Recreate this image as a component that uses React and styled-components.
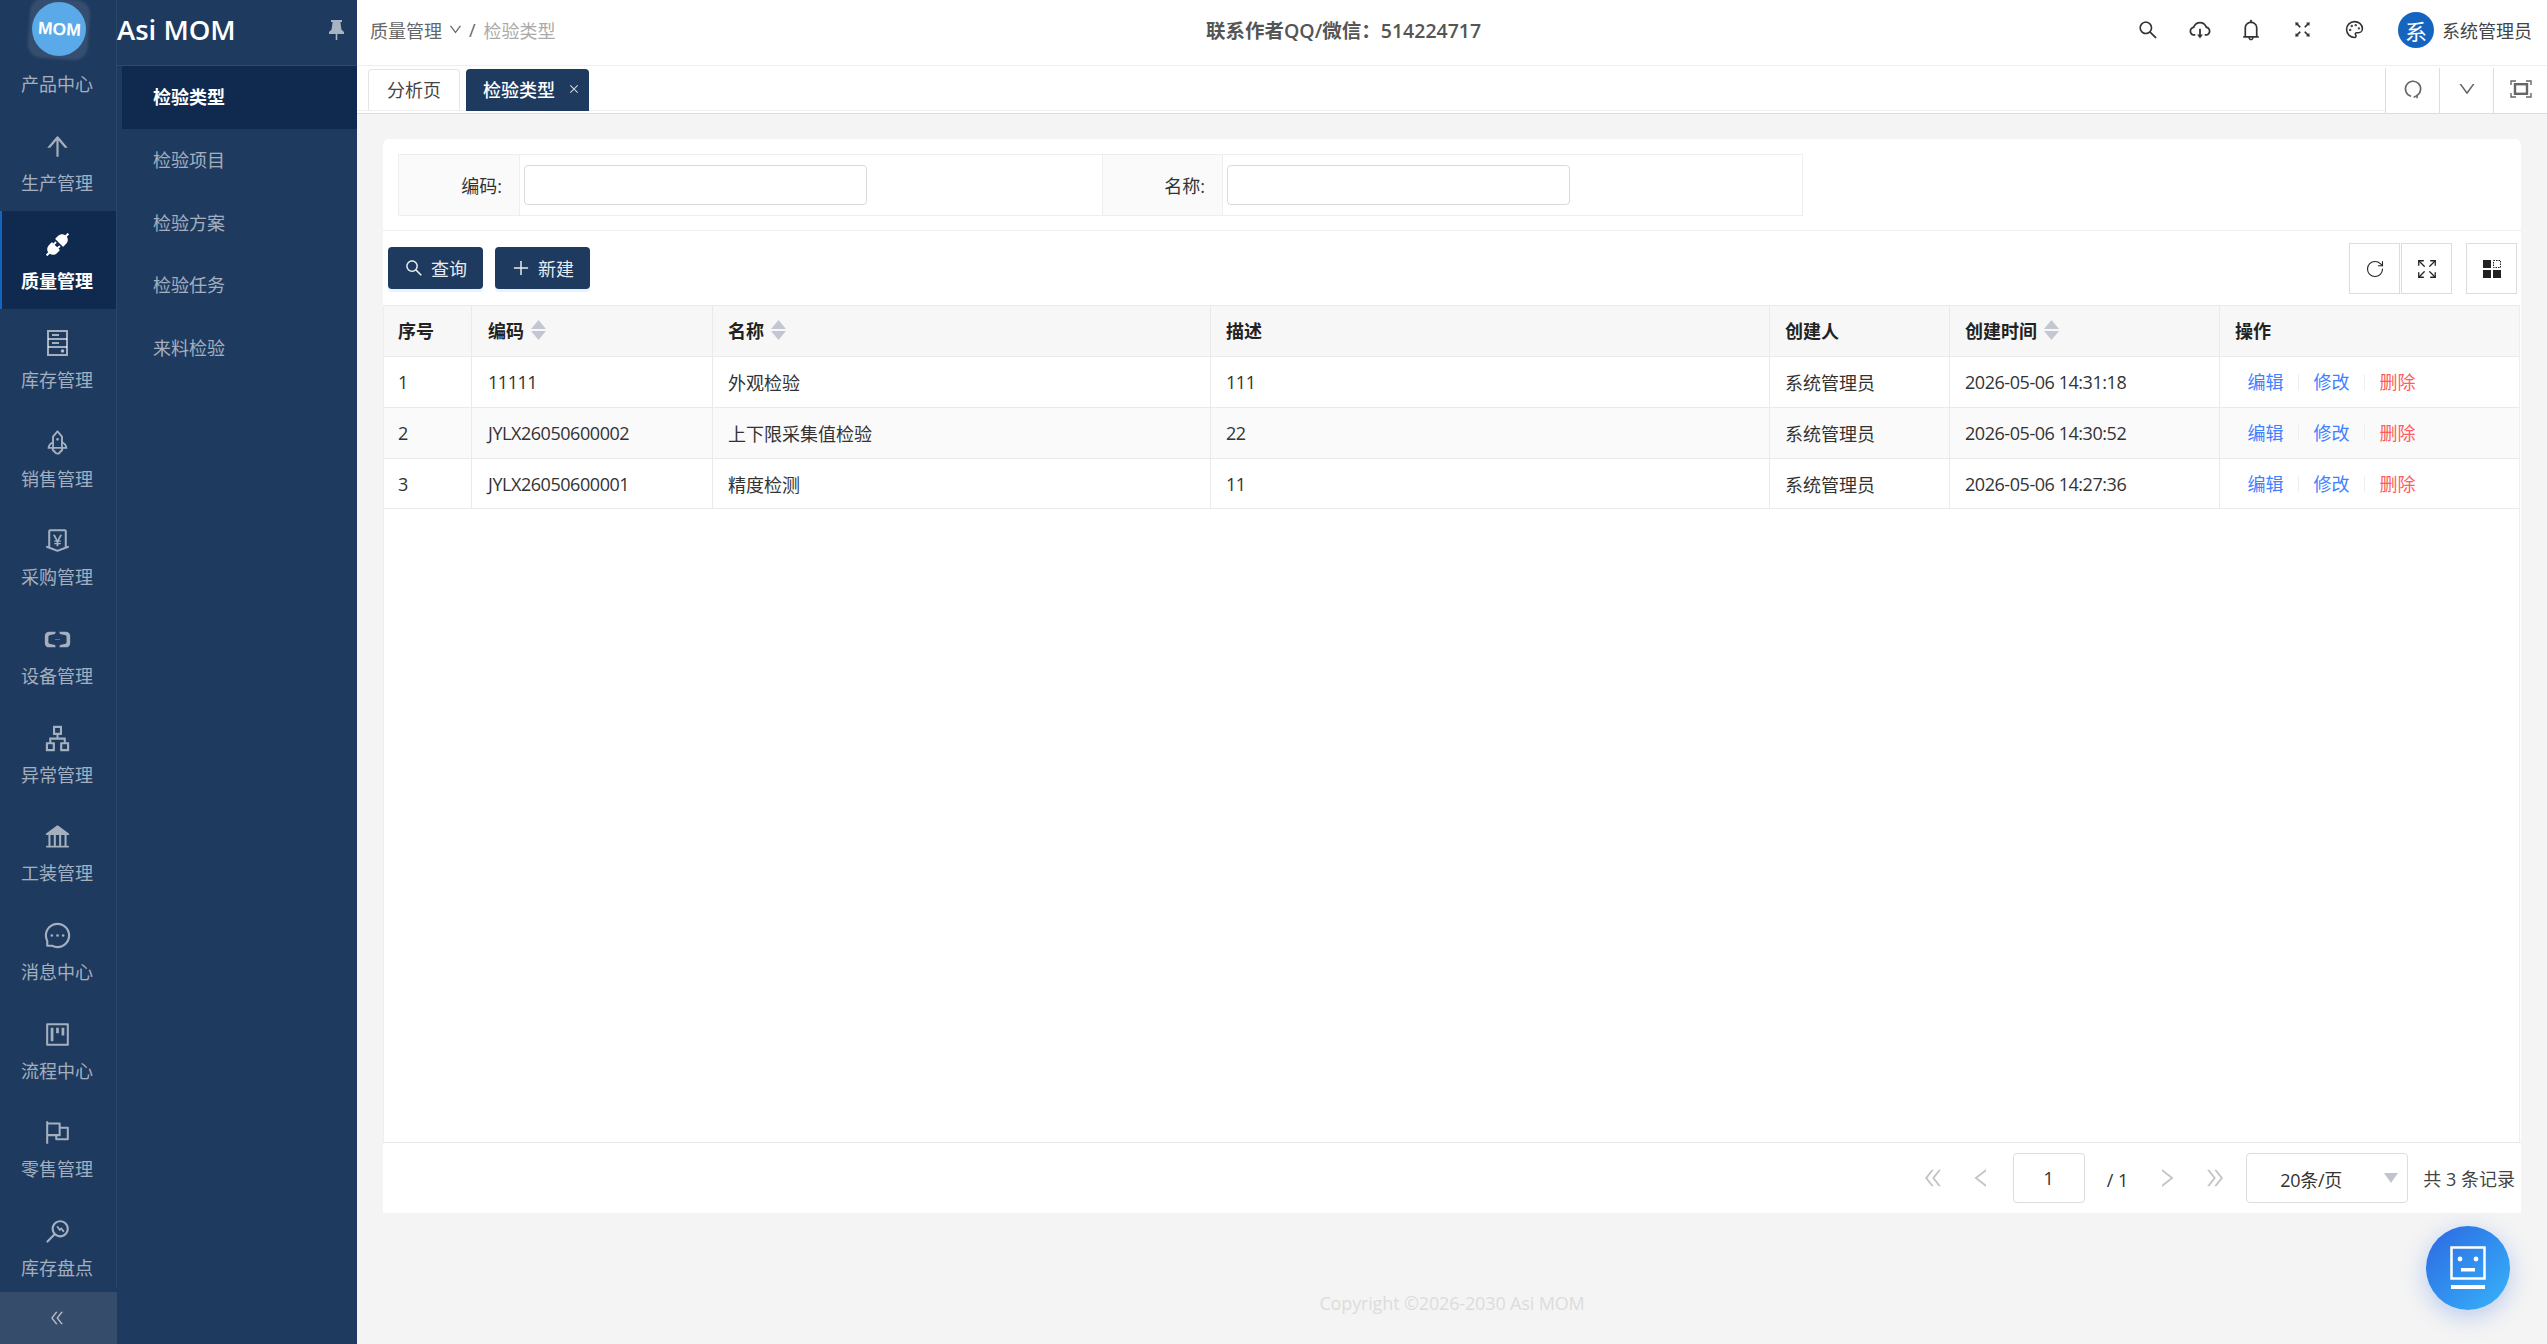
import React from 'react';
import styled, { createGlobalStyle } from 'styled-components';
import {
  AiOutlineArrowUp, AiFillApi, AiOutlineRocket, AiOutlineMoneyCollect, AiOutlineAliyun,
  AiOutlineApartment, AiFillBank, AiOutlineMessage, AiOutlineProject, AiOutlineFlag,
  AiOutlineMonitor, AiOutlineDoubleLeft, AiOutlineDoubleRight, AiOutlineLeft, AiOutlineRight,
  AiOutlineSearch, AiOutlineCloudDownload, AiOutlineBell, AiOutlineFullscreen, AiOutlineDown,
  AiOutlineClose, AiOutlinePlus,
} from 'react-icons/ai';
import { Palette, Expand, RotateCw } from 'lucide-react';

const GlobalStyle = createGlobalStyle`
  html, body { margin: 0; padding: 0; height: 100%; }
  body {
    font-family: "Open Sans", "Noto Sans CJK SC", sans-serif;
    font-size: 18px;
    color: #333;
    background: #f4f4f4;
    overflow: hidden;
  }
  * { box-sizing: border-box; }
`;

const Page = styled.div`
  display: flex;
  width: 2547px;
  height: 1344px;
  position: relative;
  overflow: hidden;
`;

const Sidebar = styled.aside`
  display: flex;
  flex: 0 0 357px;
  background: #1e3a5f;
`;

const Rail = styled.div`
  display: flex;
  flex-direction: column;
  flex: 0 0 117px;
`;

const RailList = styled.div`
  flex: 1;
  min-height: 0;
  overflow: hidden;
  border-right: 1px solid rgba(255, 255, 255, 0.07);
`;

const LogoSlot = styled.div`
  height: 66px;
  padding: 2px 0 0 32px;
`;

const Logo = styled.div`
  position: relative;
  width: 54px;
  height: 54px;
  border-radius: 50%;
  display: flex;
  align-items: center;
  justify-content: center;

  &::before {
    content: '';
    position: absolute;
    inset: -3px;
    border-radius: 14px;
    background: rgba(255, 255, 255, 0.1);
    transform: rotate(4deg);
    filter: blur(1px);
  }

  &::after {
    content: '';
    position: absolute;
    inset: 0;
    border-radius: 50%;
    background: #5aa9e8;
  }
`;

const LogoText = styled.span`
  position: relative;
  z-index: 1;
  font-family: "Liberation Sans", sans-serif;
  font-weight: 700;
  font-size: 17.5px;
  color: #fff;
  transform: rotate(3deg);
`;

const FirstLabel = styled.div`
  height: 46px;
  padding: 6px 2px 0 0;
  text-align: center;
  line-height: 24px;
  color: rgba(255, 255, 255, 0.6);
`;

const RailItem = styled.div`
  height: 98.7px;
  display: flex;
  flex-direction: column;
  align-items: center;
  padding: 20px 4px 0 0;
  border-left: 2px solid ${props => (props.$active ? '#1565c0' : 'transparent')};
  background: ${props => (props.$active ? '#102a4f' : 'transparent')};
  color: ${props => (props.$active ? '#fff' : 'rgba(255, 255, 255, 0.6)')};
  font-weight: ${props => (props.$active ? 700 : 400)};
`;

const RailIcon = styled.div`
  height: 28px;
  display: flex;
  align-items: center;
  justify-content: center;
  font-size: 29px;
  margin-bottom: 10.5px;
`;

const RailLabel = styled.div`
  line-height: 24px;
`;

const Collapse = styled.div`
  flex: 0 0 52px;
  margin-top: 4px;
  padding-right: 3px;
  background: #364c6b;
  color: rgba(255, 255, 255, 0.65);
  display: flex;
  align-items: center;
  justify-content: center;
  font-size: 18px;
`;

const SubPanel = styled.div`
  flex: 1;
  display: flex;
  flex-direction: column;
`;

const SubHead = styled.div`
  height: 66px;
  flex: none;
  display: flex;
  align-items: center;
  justify-content: space-between;
  padding: 0 13px 6px 0;
  border-bottom: 1px solid rgba(255, 255, 255, 0.08);
`;

const Brand = styled.div`
  font-size: 27.5px;
  font-weight: 600;
  color: #fff;
`;

const SubItem = styled.div`
  height: 62.7px;
  margin-left: 5px;
  padding: 0 0 2px 31px;
  display: flex;
  align-items: center;
  background: ${props => (props.$active ? '#102a4f' : 'transparent')};
  color: ${props => (props.$active ? '#fff' : 'rgba(255, 255, 255, 0.6)')};
  font-weight: ${props => (props.$active ? 700 : 400)};
`;

const Main = styled.main`
  flex: 1;
  display: flex;
  flex-direction: column;
  min-width: 0;
`;

const Header = styled.header`
  flex: 0 0 66px;
  display: flex;
  align-items: center;
  padding: 0 15px 6px 13px;
  background: #fff;
  border-bottom: 1px solid #eee;
`;

const Crumbs = styled.div`
  flex: 0 0 836px;
  display: flex;
  align-items: center;
  color: #666;
`;

const CrumbArrow = styled.span`
  display: flex;
  font-size: 15px;
  margin: 0 6px;
`;

const CrumbCurrent = styled.span`
  color: #aaa;
  margin-left: 8px;
`;

const Notice = styled.div`
  font-size: 19.5px;
  font-weight: 600;
  color: #555;
`;

const HeadTools = styled.div`
  margin-left: auto;
  display: flex;
  align-items: center;
`;

const HeadIcon = styled.div`
  width: 51.5px;
  display: flex;
  justify-content: center;
  color: #333;
  font-size: ${props => props.$size || 22}px;
`;

const Avatar = styled.div`
  width: 36px;
  height: 36px;
  margin-left: 18px;
  border-radius: 50%;
  background: #1565c0;
  color: #fff;
  font-size: 22px;
  display: flex;
  align-items: center;
  justify-content: center;
`;

const UserName = styled.div`
  margin-left: 8px;
  color: #444;
`;

const TabBar = styled.div`
  flex: 0 0 48px;
  display: flex;
  background: #fff;
  border-bottom: 1px solid #ddd;
`;

const TabStrip = styled.div`
  flex: 1;
  height: 45px;
  display: flex;
  align-items: flex-end;
  gap: 6px;
  padding-left: 11px;
  border-bottom: 1px solid #eee;
`;

const Tab = styled.div`
  height: ${props => (props.$active ? 42 : 41)}px;
  margin-bottom: ${props => (props.$active ? -1 : 0)}px;
  padding: ${props => (props.$active ? '0 0 2px 17px' : '0 18px 2px')};
  display: flex;
  align-items: center;
  gap: 13px;
  border-radius: 4px 4px 0 0;
  border: ${props => (props.$active ? 'none' : '1px solid #e4e4e4')};
  border-bottom: none;
  background: ${props => (props.$active ? '#1e3a5f' : '#fff')};
  color: ${props => (props.$active ? '#fff' : '#444')};
  font-weight: ${props => (props.$active ? 500 : 400)};
  width: ${props => (props.$active ? '123px' : 'auto')};
`;

const TabClose = styled.span`
  display: flex;
  font-size: 12px;
  color: #ddd;
`;

const TabAction = styled.div`
  width: 54px;
  margin-top: 2px;
  padding-bottom: 3px;
  display: flex;
  align-items: center;
  justify-content: center;
  border-left: 1px solid #ddd;
  color: #666;
  font-size: 20px;
`;

const Content = styled.div`
  flex: 1;
  min-height: 0;
  padding: 25px 26px 0;
  background: #f4f4f4;
  display: flex;
  flex-direction: column;
`;

const SearchCard = styled.section`
  flex: 0 0 92px;
  padding: 15px 0 0 15px;
  background: #fff;
  border-radius: 6px 6px 0 0;
  border-bottom: 1px solid #eee;
`;

const FormRow = styled.div`
  width: 1405px;
  height: 62px;
  display: flex;
  border: 1px solid #eee;
`;

const FormCell = styled.div`
  flex: 0 0 703px;
  display: flex;
  align-items: center;
  &:nth-child(2) { flex: 1; }
`;

const FormLabel = styled.label`
  flex: 0 0 121px;
  align-self: stretch;
  display: flex;
  align-items: center;
  justify-content: flex-end;
  padding: 0 17px 1px 0;
  background: #fafafa;
  border-right: 1px solid #eee;
  border-left: ${props => (props.$split ? '1px solid #eee' : 'none')};
`;

const FormInput = styled.input`
  width: 343px;
  height: 40px;
  margin-left: 4px;
  background: #fff;
  border: 1px solid #d9d9d9;
  border-radius: 4px;
`;

const ToolRow = styled.div`
  flex: 0 0 74px;
  display: flex;
  align-items: flex-start;
  padding: 12px 4px 0 5px;
  background: #fff;
`;

const ActionButton = styled.button`
  width: 95px;
  height: 42px;
  margin: 4px 12px 0 0;
  padding: 0 0 1px;
  display: flex;
  align-items: center;
  justify-content: center;
  gap: 7px;
  border: none;
  border-radius: 4px;
  background: #1e3a5f;
  color: #e8ecf1;
  font: inherit;
  box-shadow: 0 3px 0 #e6f4ff;
`;

const ToolSpacer = styled.div`
  flex: 1;
`;

const SquareTool = styled.div`
  width: 51px;
  height: 51px;
  margin-left: ${props => props.$gap || 0}px;
  display: flex;
  align-items: center;
  justify-content: center;
  border: 1px solid #dcdde3;
  color: #222;
  font-size: 20px;
`;

const TableBox = styled.section`
  height: 908px;
  flex: none;
  display: flex;
  flex-direction: column;
  background: #fff;
`;

const TableWrap = styled.div`
  flex: 1;
  min-height: 0;
  margin-right: 1px;
  border-right: 1px solid #eee;
  border-left: 1px solid #eee;
`;

const Row = styled.div`
  display: grid;
  grid-template-columns: 88px 241px 498px 559px 180px 270px 1fr;
  height: 51px;
  border-top: 1px solid #eaeaea;
  border-bottom: ${props => (props.$last ? '1px solid #eaeaea' : 'none')};
  background: ${props => (props.$head ? '#f7f7f7' : props.$odd ? '#fafafa' : '#fff')};
  font-weight: ${props => (props.$head ? 700 : 400)};
  color: ${props => (props.$head ? '#222' : '#333')};
`;

const Cell = styled.div`
  display: flex;
  align-items: center;
  gap: 7px;
  padding: 0 0 ${props => (props.$up ? 2 : 0)}px ${props => props.$pad || 15}px;
  border-right: 1px solid #eaeaea;
  letter-spacing: ${props => (props.$num ? '-0.45px' : 'normal')};
  &:last-child { border-right: none; }
`;

const RowLink = styled.span`
  padding: 0 14.5px;
  line-height: 16px;
  border-right: 1px solid #eee;
  color: ${props => (props.$danger ? '#ff5c5c' : '#3f80ff')};
  &:last-child { border-right: none; }
`;

const LinkCell = styled(Cell)`
  gap: 0;
  padding-left: 13px;
`;

const Pager = styled.div`
  flex: 0 0 71px;
  display: flex;
  align-items: center;
  justify-content: flex-end;
  padding: 0 6px 0 0;
  border-top: 1px solid #e8e8e8;
`;

const PageArrow = styled.div`
  width: 48px;
  margin-left: ${props => props.$gap || 0}px;
  display: flex;
  justify-content: center;
  color: #c4c4c4;
  font-size: 24px;
`;

const PageInput = styled.div`
  width: 72px;
  height: 50px;
  margin-left: 8px;
  display: flex;
  align-items: center;
  justify-content: center;
  border: 1px solid #dcdde3;
  border-radius: 4px;
`;

const PageTotal = styled.div`
  margin-left: 22px;
  width: 21px;
  padding-top: 3px;
  white-space: nowrap;
`;

const PageSelect = styled.div`
  position: relative;
  width: 162px;
  height: 50px;
  margin-left: 7px;
  padding: 2px 0 0 33px;
  display: flex;
  align-items: center;
  border: 1px solid #dcdde3;
  border-radius: 4px;
  letter-spacing: -0.3px;

  &::after {
    content: '';
    position: absolute;
    right: 9px;
    top: 19px;
    border-left: 7px solid transparent;
    border-right: 7px solid transparent;
    border-top: 10px solid #c0c4cf;
  }
`;

const Records = styled.div`
  margin-left: 15px;
  color: #444;
  white-space: nowrap;
`;

const Copyright = styled.footer`
  margin-top: 78px;
  text-align: center;
  line-height: 24px;
  letter-spacing: -0.15px;
  color: #dcdcdc;
`;

const Fab = styled.div`
  position: absolute;
  right: 37px;
  bottom: 34px;
  width: 84px;
  height: 84px;
  display: flex;
  align-items: center;
  justify-content: center;
  border-radius: 50%;
  background: linear-gradient(135deg, #2b68e2, #38b4fa);
  box-shadow: 0 6px 24px rgba(43, 107, 228, 0.3);
`;

const SortIcon = () => (
  <svg width="15" height="20" viewBox="0 0 15 20" fill="#c3c7d1">
    <path d="M7.5 0 15 9H0z" />
    <path d="M0 11h15l-7.5 9z" />
  </svg>
);

const HddIcon = () => (
  <svg width="21" height="26" viewBox="0 0 21 26" fill="none" stroke="currentColor" strokeWidth="2">
    <rect x="1" y="1" width="19" height="24" />
    <path d="M1 9h19M1 17h19M5 5h7M5 13h7" />
    <circle cx="15.5" cy="21" r="0.8" fill="currentColor" />
  </svg>
);

const PinIcon = () => (
  <svg width="15" height="20" viewBox="0 0 15 20" fill="#a9b4c3">
    <path d="M2 0h11v2h-1.6l1 7.5L15 12v2H0v-2l2.6-2.5 1-7.5H2z" />
    <rect x="6.7" y="14" width="1.6" height="6" />
  </svg>
);

const ReloadGap = () => (
  <svg width="20" height="20" viewBox="0 0 20 20" fill="none" stroke="#666" strokeWidth="1.6">
    <path d="M8 17.2A7.6 7.6 0 1 1 13.6 16.6" />
    <path d="M10.6 18.4l3.2-1.8.6 2.6" />
  </svg>
);

const FrameIcon = () => (
  <svg width="22" height="18" viewBox="0 0 22 18" fill="none" stroke="#666">
    <path d="M1 5V1h5M16 1h5v4M21 13v4h-5M6 17H1v-4" strokeWidth="1.4" />
    <rect x="5" y="4.2" width="12" height="9.6" strokeWidth="2.4" />
  </svg>
);

const LayoutIcon = () => (
  <svg width="18" height="18" viewBox="0 0 18 18">
    <rect x="0" y="0" width="8" height="8" fill="#222" />
    <rect x="10.5" y="0.5" width="7" height="7" fill="none" stroke="#222" strokeDasharray="1.5 1" />
    <rect x="0" y="10" width="8" height="8" fill="#222" />
    <rect x="10" y="10" width="8" height="8" fill="#222" />
  </svg>
);

const BotIcon = () => (
  <svg width="36" height="44" viewBox="0 0 36 44" fill="none">
    <rect x="1.5" y="1.5" width="33" height="31" stroke="#fff" strokeWidth="2.5" />
    <circle cx="10" cy="13" r="2.4" fill="#fff" />
    <circle cx="26" cy="13" r="2.4" fill="#fff" />
    <rect x="11" y="22" width="14" height="3.5" fill="#fff" />
    <rect x="1" y="39" width="34" height="4" fill="#fff" />
  </svg>
);

const railItems = [
  { label: '生产管理', icon: <AiOutlineArrowUp /> },
  { label: '质量管理', icon: <AiFillApi />, active: true },
  { label: '库存管理', icon: <HddIcon /> },
  { label: '销售管理', icon: <AiOutlineRocket /> },
  { label: '采购管理', icon: <AiOutlineMoneyCollect /> },
  { label: '设备管理', icon: <AiOutlineAliyun /> },
  { label: '异常管理', icon: <AiOutlineApartment /> },
  { label: '工装管理', icon: <AiFillBank /> },
  { label: '消息中心', icon: <AiOutlineMessage /> },
  { label: '流程中心', icon: <AiOutlineProject /> },
  { label: '零售管理', icon: <AiOutlineFlag /> },
  { label: '库存盘点', icon: <AiOutlineMonitor /> },
];

const subItems = ['检验类型', '检验项目', '检验方案', '检验任务', '来料检验'];

const rows = [
  { id: 1, code: '11111', name: '外观检验', desc: '111', user: '系统管理员', time: '2026-05-06 14:31:18' },
  { id: 2, code: 'JYLX26050600002', name: '上下限采集值检验', desc: '22', user: '系统管理员', time: '2026-05-06 14:30:52' },
  { id: 3, code: 'JYLX26050600001', name: '精度检测', desc: '11', user: '系统管理员', time: '2026-05-06 14:27:36' },
];

const App = () => (
  <Page>
    <GlobalStyle />
    <Sidebar>
      <Rail>
        <RailList>
          <LogoSlot>
            <Logo><LogoText>MOM</LogoText></Logo>
          </LogoSlot>
          <FirstLabel>产品中心</FirstLabel>
          {railItems.map(item => (
            <RailItem key={item.label} $active={item.active}>
              <RailIcon>{item.icon}</RailIcon>
              <RailLabel>{item.label}</RailLabel>
            </RailItem>
          ))}
        </RailList>
        <Collapse><AiOutlineDoubleLeft /></Collapse>
      </Rail>
      <SubPanel>
        <SubHead>
          <Brand>Asi MOM</Brand>
          <PinIcon />
        </SubHead>
        {subItems.map((item, index) => (
          <SubItem key={item} $active={index === 0}>{item}</SubItem>
        ))}
      </SubPanel>
    </Sidebar>

    <Main>
      <Header>
        <Crumbs>
          质量管理
          <CrumbArrow><AiOutlineDown /></CrumbArrow>
          /
          <CrumbCurrent>检验类型</CrumbCurrent>
        </Crumbs>
        <Notice>联系作者QQ/微信：514224717</Notice>
        <HeadTools>
          <HeadIcon $size={22}><AiOutlineSearch /></HeadIcon>
          <HeadIcon $size={24}><AiOutlineCloudDownload /></HeadIcon>
          <HeadIcon $size={24}><AiOutlineBell /></HeadIcon>
          <HeadIcon $size={21}><AiOutlineFullscreen /></HeadIcon>
          <HeadIcon><Palette size={19} /></HeadIcon>
          <Avatar>系</Avatar>
          <UserName>系统管理员</UserName>
        </HeadTools>
      </Header>

      <TabBar>
        <TabStrip>
          <Tab>分析页</Tab>
          <Tab $active>
            检验类型
            <TabClose><AiOutlineClose /></TabClose>
          </Tab>
        </TabStrip>
        <TabAction><ReloadGap /></TabAction>
        <TabAction><AiOutlineDown /></TabAction>
        <TabAction><FrameIcon /></TabAction>
      </TabBar>

      <Content>
        <SearchCard>
          <FormRow>
            <FormCell>
              <FormLabel>编码:</FormLabel>
              <FormInput />
            </FormCell>
            <FormCell>
              <FormLabel $split>名称:</FormLabel>
              <FormInput />
            </FormCell>
          </FormRow>
        </SearchCard>

        <ToolRow>
          <ActionButton><AiOutlineSearch size={20} />查询</ActionButton>
          <ActionButton><AiOutlinePlus size={20} />新建</ActionButton>
          <ToolSpacer />
          <SquareTool><RotateCw size={20} strokeWidth={1.3} /></SquareTool>
          <SquareTool $gap={1}><Expand size={22} strokeWidth={1.4} /></SquareTool>
          <SquareTool $gap={14}><LayoutIcon /></SquareTool>
        </ToolRow>

        <TableBox>
          <TableWrap>
            <Row $head>
              <Cell $pad={14} $up>序号</Cell>
              <Cell $pad={16} $up>编码<SortIcon /></Cell>
              <Cell $up>名称<SortIcon /></Cell>
              <Cell $up>描述</Cell>
              <Cell $up>创建人</Cell>
              <Cell $up>创建时间<SortIcon /></Cell>
              <Cell $up>操作</Cell>
            </Row>
            {rows.map((row, index) => (
              <Row key={row.id} $odd={index === 1} $last={index === rows.length - 1}>
                <Cell $pad={14}>{row.id}</Cell>
                <Cell $pad={16} $num>{row.code}</Cell>
                <Cell>{row.name}</Cell>
                <Cell $num>{row.desc}</Cell>
                <Cell>{row.user}</Cell>
                <Cell $num>{row.time}</Cell>
                <LinkCell>
                  <RowLink>编辑</RowLink>
                  <RowLink>修改</RowLink>
                  <RowLink $danger>删除</RowLink>
                </LinkCell>
              </Row>
            ))}
          </TableWrap>
          <Pager>
            <PageArrow><AiOutlineDoubleLeft /></PageArrow>
            <PageArrow><AiOutlineLeft /></PageArrow>
            <PageInput>1</PageInput>
            <PageTotal>/ 1</PageTotal>
            <PageArrow $gap={15.6}><AiOutlineRight /></PageArrow>
            <PageArrow><AiOutlineDoubleRight /></PageArrow>
            <PageSelect>20条/页</PageSelect>
            <Records>共 3 条记录</Records>
          </Pager>
        </TableBox>

        <Copyright>Copyright ©2026-2030 Asi MOM</Copyright>
      </Content>
    </Main>

    <Fab><BotIcon /></Fab>
  </Page>
);

export default App;
